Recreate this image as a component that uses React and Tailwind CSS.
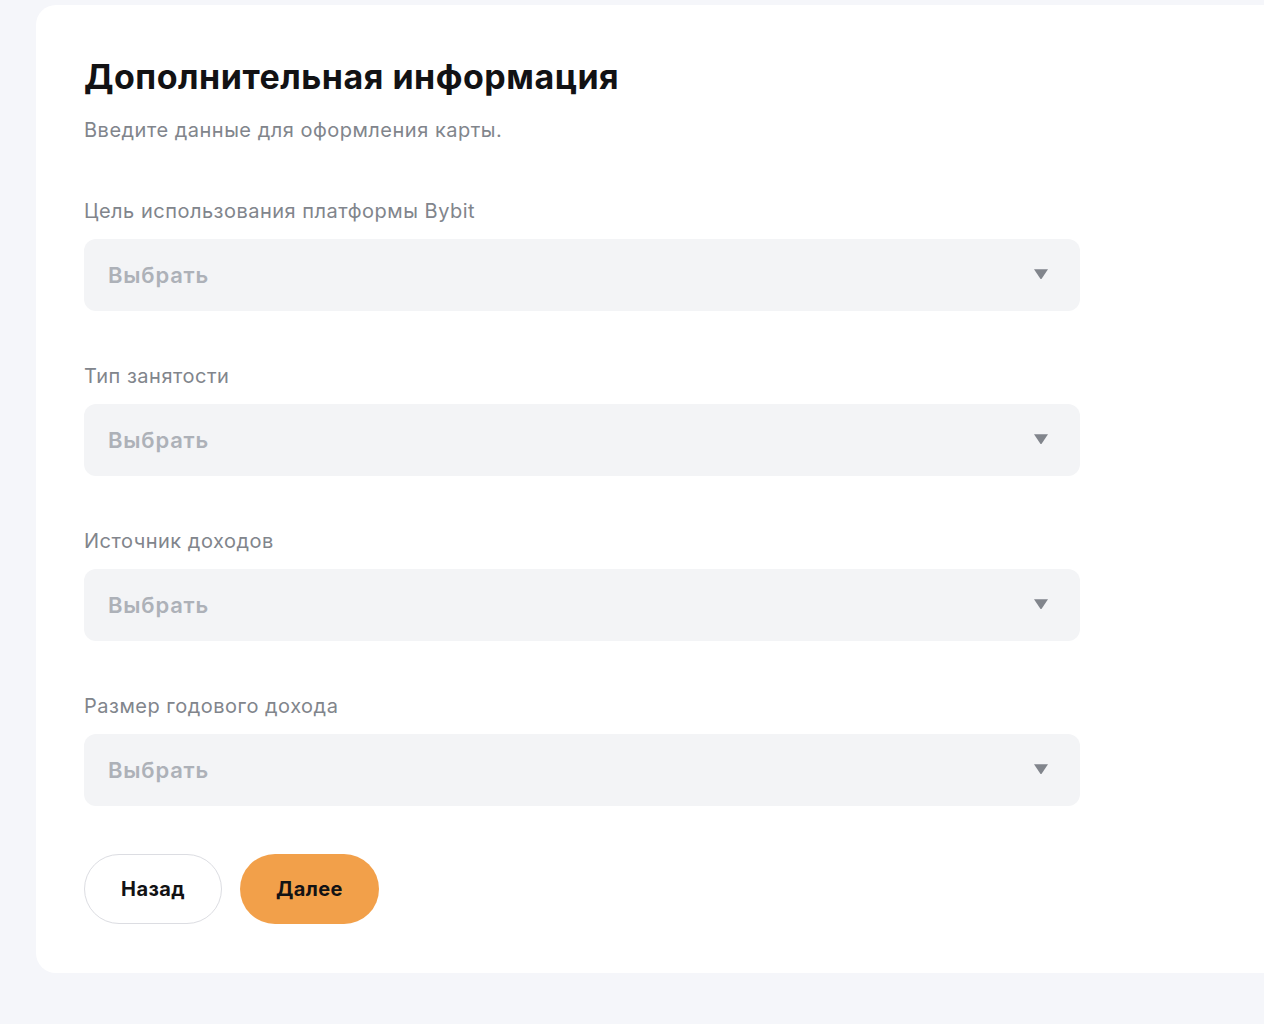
const fields = [
  "Цель использования платформы Bybit",
  "Тип занятости",
  "Источник доходов",
  "Размер годового дохода",
];

function SelectField({ label }) {
  return (
    <div className="flex flex-col">
      <label className="text-[20px] leading-[28px] tracking-[0.5px] text-[#81858c]">{label}</label>
      <button
        type="button"
        className="mt-[14px] h-[72px] w-[996px] rounded-xl bg-[#f3f4f6] pl-6 pr-[31px] flex items-center justify-between"
      >
        <span className="text-[22px] font-semibold tracking-[0.8px] text-[#adb1b8]">Выбрать</span>
        <svg width="16" height="12" viewBox="0 0 16 12" className="-mt-[2px]" aria-hidden="true">
          <path d="M1 1.2h14L8.8 10.4a1 1 0 0 1-1.6 0z" fill="#81858c" />
        </svg>
      </button>
    </div>
  );
}

export default function App() {
  return (
    <div
      className="min-h-screen bg-[#f5f6fa] pt-[5px] pl-9 pb-[52px]"
      style={{ fontFamily: "Inter, 'Noto Sans', sans-serif" }}
    >
      <div className="bg-white rounded-l-[20px] pl-12 pt-[52px] pb-[49px]">
        <h1 className="text-[34px] leading-[40px] font-bold text-[#121214] tracking-[0.5px]">
          Дополнительная информация
        </h1>
        <p className="mt-[19px] text-[20px] leading-[28px] tracking-[0.5px] text-[#81858c]">
          Введите данные для оформления карты.
        </p>

        <div className="mt-[53px] flex flex-col gap-[51px]">
          {fields.map((f) => (
            <SelectField key={f} label={f} />
          ))}
        </div>

        <div className="mt-12 flex gap-[18px]">
          <button
            type="button"
            className="h-[70px] w-[138px] rounded-full border border-[#dcdde2] bg-white text-[20px] font-bold tracking-[0.4px] text-[#121214]"
          >
            Назад
          </button>
          <button
            type="button"
            className="h-[70px] w-[139px] rounded-full bg-[#f2a04a] text-[20px] font-bold tracking-[0.4px] text-[#121214]"
          >
            Далее
          </button>
        </div>
      </div>
    </div>
  );
}
